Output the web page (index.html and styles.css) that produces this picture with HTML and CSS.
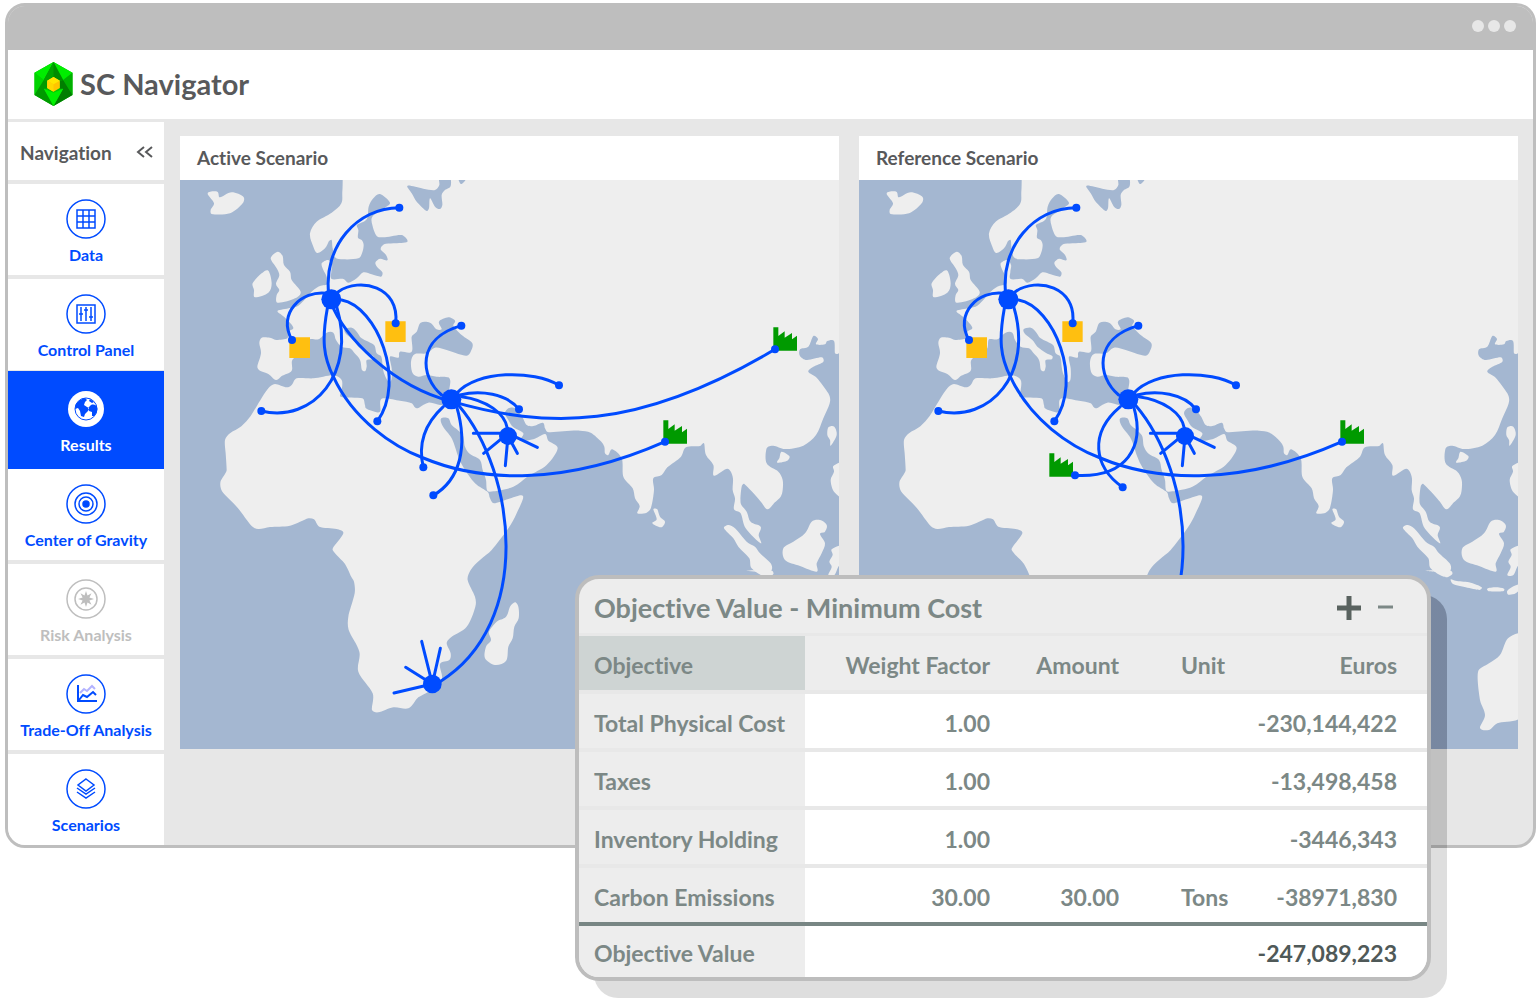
FILE: index.html
```html
<!DOCTYPE html>
<html lang="en">
<head>
<meta charset="utf-8">
<title>SC Navigator</title>
<meta name="viewport" content="width=device-width, initial-scale=1">
<link rel="stylesheet" href="styles.css">
</head>
<body>
<div class="stage">
  <div class="window">
    <div class="titlebar"><span class="dot"></span><span class="dot"></span><span class="dot"></span></div>
    <header class="brand">
      <svg class="logo" viewBox="0 0 114 132" aria-hidden="true">
        <path fill="#00c800" d="M57 0l57 32v67l-57 33L0 99V32z"/>
        <path fill="#00ee00" d="M57 0L0 32l28 22zM57 0l57 32-28 22z"/>
        <path fill="#008c00" d="M57 0L28 54l10 2 19-11 19 11 10-2z"/>
        <path fill="#00a400" d="M57 0L28 54l10 2 19-11z"/>
        <path fill="#00d400" d="M0 32l28 22L0 99z"/>
        <path fill="#00b000" d="M114 32L86 54l28 45z"/>
        <path fill="#009a00" d="M28 54L0 99l28-19h10V56zM0 99l28-19 29 52z"/>
        <path fill="#007e00" d="M86 54l28 45-28-19H76V56zM114 99L86 80l-29 52z"/>
        <path fill="#00f000" d="M28 80l29 12 29-12-29 52z"/>
        <path fill="#ffc400" d="M57 45l19 11v22L57 89 38 78V56z"/>
        <path fill="#ffe600" d="M57 45l19 11-19 11-19-11z"/>
        <path fill="#ffd800" d="M38 56l19 11v22L38 78z"/>
      </svg>
      <h1>SC Navigator</h1>
    </header>
    <div class="body">
      <nav class="sidebar" aria-label="Navigation">
        <div class="sidebar-head"><span>Navigation</span>
          <button class="collapse" aria-label="Collapse navigation"><svg viewBox="0 0 18 12"><path d="M8 1L2 6l6 5M16 1l-6 5 6 5"/></svg></button>
        </div>
        <a class="item" href="#data">
          <svg class="icon" viewBox="0 0 40 40"><circle cx="20" cy="20" r="19"/><path d="M11 11h18v18H11zM17 11v18M23 11v18M11 17h18M11 23h18"/></svg>
          <span>Data</span></a>
        <a class="item" href="#control">
          <svg class="icon" viewBox="0 0 40 40"><circle cx="20" cy="20" r="19"/><path d="M11 11h18v18H11zM15 13v14M20 13v14M25 13v14M13 20h4M18 16h4M23 23h4"/></svg>
          <span>Control Panel</span></a>
        <a class="item active" href="#results" aria-current="page">
          <svg class="icon" viewBox="0 0 40 40"><circle class="disc" cx="20" cy="20" r="18"/><circle class="globe" cx="20" cy="20" r="11"/><path class="landmass" d="M10 15c2-3 5-5 9-6l2 2-2 2-1 3 3 2 2 1-1 3-3 3-1 3-3-1-1-5-2-3-3 1zM31 18c-1-2-3-3-6-2l-3 3 1 3 3 1 0 4 2 0c2-2 4-5 3-9zM24 10l4 3-2 1-3-2z"/></svg>
          <span>Results</span></a>
        <a class="item" href="#gravity">
          <svg class="icon" viewBox="0 0 40 40"><circle cx="20" cy="20" r="19"/><circle cx="20" cy="20" r="11"/><circle cx="20" cy="20" r="7"/><circle class="solid" cx="20" cy="20" r="3"/></svg>
          <span>Center of Gravity</span></a>
        <a class="item disabled" href="#risk" aria-disabled="true">
          <svg class="icon" viewBox="0 0 40 40"><circle cx="20" cy="20" r="19"/><circle cx="20" cy="20" r="11"/><path class="solid thin" d="M20 12l1.500 4.500 4-2.200-2.100 4.100 4.600 1.600-4.600 1.600 2.100 4.100-4-2.200L20 28l-1.500-4.500-4 2.200 2.100-4.100L12 20l4.600-1.600-2.100-4.100 4 2.200z"/></svg>
          <span>Risk Analysis</span></a>
        <a class="item" href="#tradeoff">
          <svg class="icon" viewBox="0 0 40 40"><circle cx="20" cy="20" r="19"/><path class="pale" d="M14 19l4-4 3 2 5-5 3 3"/><path class="bold" d="M12 11v16h19M13 26l4-5 4 2 6-5 3 3"/></svg>
          <span>Trade-Off Analysis</span></a>
        <a class="item" href="#scenarios">
          <svg class="icon" viewBox="0 0 40 40"><circle cx="20" cy="20" r="19"/><path d="M20 10l8 6-8 6-8-6zM11 19l9 6 9-6M11 23l9 6 9-6"/></svg>
          <span>Scenarios</span></a>
      </nav>
      <main class="panels">
        <section class="panel">
          <h2>Active Scenario</h2>
          <svg class="map" viewBox="0 0 1977 1707" role="img" aria-label="Map of the active scenario">
            <defs>
              <g id="land">
                <path data-coast="488,0 487,35 484,70 455,98 410,125 390,160 400,200 412,219 435,205 447,183 455,180 458,205 465,232 490,238 535,235 546,220 551,195 545,180 534,173 535,150 531,135 560,118 566,80 580,55 600,42 630,68 612,85 577,110 577,135 590,168 610,172 665,165 682,185 640,190 612,193 602,208 618,225 622,241 600,236 586,248 592,262 607,277 603,290 575,283 550,277 530,295 505,308 490,297 455,297 454,275 456,255 445,240 425,250 430,270 440,290 443,312 420,318 398,332 380,352 355,377 330,384 293,392 305,405 320,418 340,443 325,455 322,475 290,480 270,473 245,473 238,490 243,520 232,560 240,572 265,582 288,600 305,588 335,572 337,540 365,518 385,505 390,478 415,478 440,458 460,458 468,480 485,500 510,505 524,520 540,540 546,570 556,573 560,560 560,540 578,538 580,528 560,518 535,500 520,480 498,462 494,448 515,443 530,455 545,475 582,495 590,520 604,530 608,560 612,580 626,606 634,600 635,565 630,530 655,533 660,515 695,515 695,470 710,455 722,428 750,428 770,448 785,447 777,425 805,412 825,422 820,437 845,465 877,490 872,515 860,527 835,522 800,510 765,503 740,520 705,522 693,545 698,580 715,590 740,585 770,590 805,592 811,605 805,640 800,670 780,675 745,668 710,685 695,670 660,662 605,656 600,695 575,692 558,685 555,675 547,655 482,650 485,630 485,600 460,586 400,595 350,595 335,615 320,622 285,612 265,625 240,662 212,708 185,738 150,760 135,780 137,820 140,870 135,882 121,908 127,935 170,980 215,1038 235,1047 270,1041 330,1037 385,1015 402,1018 418,1040 470,1047 490,1060 458,1106 465,1120 495,1152 512,1187 522,1205 524,1240 505,1310 506,1350 538,1415 535,1475 578,1540 576,1590 595,1597 640,1582 685,1585 715,1552 745,1535 785,1500 780,1452 808,1440 812,1420 800,1390 815,1370 860,1340 886,1280 885,1250 863,1200 872,1170 900,1140 935,1110 985,1045 1010,1000 1029,948 985,957 942,970 930,955 924,937 885,910 850,862 835,830 815,775 788,738 783,716 805,715 815,735 848,765 855,800 870,822 900,840 908,870 918,900 922,932 940,934 1000,920 1045,888 1100,855 1133,805 1105,782 1095,762 1060,778 1020,782 1030,760 1000,742 985,720 975,700 985,685 1005,684 1025,708 1040,735 1060,738 1088,728 1095,745 1103,756 1150,754 1200,752 1232,758 1264,785 1273,800 1275,820 1285,825 1297,808 1325,835 1330,890 1358,925 1365,955 1379,978 1372,1000 1400,998 1413,983 1422,930 1420,895 1445,885 1462,862 1503,830 1518,802 1560,798 1572,790 1578,825 1600,855 1602,887 1642,866 1658,890 1658,930 1665,955 1662,988 1682,1000 1697,1045 1742,1090 1736,1065 1742,1040 1712,1025 1700,995 1682,970 1685,920 1693,912 1740,962 1762,988 1785,967 1802,950 1808,930 1808,900 1795,875 1760,850 1760,805 1780,797 1815,807 1870,797 1908,765 1930,715 1950,665 1945,640 1910,593 1885,575 1900,560 1930,545 1925,532 1880,540 1860,528 1860,508 1885,500 1900,468 1914,477 1908,493 1935,493 1942,483 1962,483 1965,520 1977,518 1977,-20 488,-20"/>
                <path data-coast="83,40 112,35 120,52 155,37 190,50 188,70 150,100 95,102 92,90 102,70"/>
                <path data-coast="272,235 293,215 308,228 312,255 330,275 335,300 362,335 345,355 293,368 290,345 298,330 288,312 298,285 290,265"/>
                <path data-coast="218,310 245,280 265,272 275,310 265,338 225,352 222,330"/>
                <path data-coast="1005,1267 1015,1280 1016,1315 1003,1340 998,1375 985,1400 978,1443 945,1455 915,1435 918,1400 933,1380 927,1355 950,1325 978,1310 990,1280"/>
                <path data-coast="1420,988 1432,988 1440,1010 1455,1025 1443,1042 1417,1030 1430,1018"/>
                <path data-coast="1632,1045 1645,1035 1665,1045 1700,1085 1725,1100 1740,1120 1772,1150 1775,1170 1755,1190 1715,1165 1708,1135 1675,1100 1660,1075"/>
                <path data-coast="1810,1105 1840,1085 1875,1060 1895,1025 1920,1020 1940,1035 1935,1055 1920,1062 1935,1090 1925,1120 1910,1150 1910,1175 1860,1158 1815,1140"/>
                <path data-coast="1990,1098 1955,1108 1958,1125 1948,1145 1955,1160 1945,1185 1963,1185 1975,1160 1990,1150"/>
                <path data-coast="1990,850 1960,858 1962,875 1952,900 1962,935 1990,950"/>
                <path data-coast="1945,742 1963,740 1970,765 1952,797 1950,780 1942,765"/>
                <path data-coast="1805,815 1828,828 1822,842 1792,848 1798,835"/>
                <path data-coast="1700,1172 1775,1172 1780,1182 1762,1192 1750,1178"/>
                <path data-coast="1775,1198 1790,1202 1830,1207 1868,1222 1862,1230 1820,1222 1782,1212"/>
                <path data-coast="1885,1226 1910,1222 1935,1226 1932,1234 1890,1234"/>
                <path data-coast="1945,1232 1965,1218 1990,1210 1990,1220 1970,1240 1948,1244"/>
                <path data-coast="1990,1365 1947,1375 1923,1425 1890,1450 1857,1476 1863,1560 1878,1605 1863,1644 1890,1650 1915,1630 1990,1605"/>
                <path class="sea" data-coast="683,17 730,26 765,30 778,15 778,-10 808,-10 812,18 795,30 785,45 787,75 780,87 765,80 750,55 747,85 740,93 710,65 695,40"/>
                <path class="sea" data-coast="835,-10 838,5 845,12 858,-5"/>
              </g>
              <path id="factory" class="factory" d="M0 0h15v26l19-14v19l22-14v19l15-11v45H0z"/>
              <g id="network">
                <path class="store" d="M328 472h62v62h-62zM616 424h61v62h-61z"/>
                <use href="#factory" x="1450" y="721"/>
                <g class="routes">
                  <path d="M446 340C430 200 530 83 658 83"/>
                  <path d="M440 340C365 330 290 400 336 480"/>
                  <path d="M475 335C540 290 660 320 647 430"/>
                  <path d="M470 380C530 580 400 730 244 693"/>
                  <path d="M485 360C590 380 680 600 592 724"/>
                  <path d="M442 385C425 480 430 530 460 590C520 720 640 800 730 834C900 905 1150 920 1455 785"/>
                  <path d="M785 645C720 590 708 475 844 437"/>
                  <path d="M830 640C890 570 1060 570 1137 616"/>
                  <path d="M840 645C900 630 980 640 1017 688"/>
                  <path d="M845 650C920 660 975 700 982 745"/>
                  <path d="M835 675C1010 880 1060 1330 780 1505"/>
                  <path d="M880 760H984L911 820M984 768L976 857M984 768L1012 820M984 760L1072 802"/>
                  <path d="M757 1512L725 1384M757 1512L781 1405M757 1512L677 1462M757 1512L642 1539"/>
                </g>
                <g class="nodes">
                  <circle cx="454" cy="358" r="30"/><circle cx="814" cy="658" r="30"/><circle cx="984" cy="768" r="27"/><circle cx="757" cy="1512" r="28"/>
                  <circle cx="658" cy="83" r="12"/><circle cx="336" cy="480" r="12"/><circle cx="647" cy="430" r="12"/><circle cx="244" cy="693" r="12"/>
                  <circle cx="592" cy="724" r="12"/><circle cx="1455" cy="785" r="12"/><circle cx="844" cy="437" r="12"/><circle cx="1137" cy="616" r="12"/><circle cx="1017" cy="688" r="12"/>
                </g>
              </g>
            </defs>
            <use href="#land"/>
            <use href="#factory" x="1780" y="442"/>
            <use href="#network"/>
            <g class="routes">
              <path d="M454 370C490 470 640 620 814 664C1100 745 1370 755 1785 508"/>
              <path d="M790 680C730 735 715 800 730 862"/>
              <path d="M830 680C865 800 840 900 760 946"/>
            </g>
            <g class="nodes"><circle cx="1785" cy="508" r="12"/><circle cx="730" cy="862" r="12"/><circle cx="760" cy="946" r="12"/></g>
          </svg>
        </section>
        <section class="panel">
          <h2>Reference Scenario</h2>
          <svg class="map" viewBox="0 0 1977 1707" role="img" aria-label="Map of the reference scenario">
            <use href="#land"/>
            <g transform="translate(-6 0)">
              <use href="#network"/>
              <use href="#factory" x="577" y="820"/>
              <g class="routes">
                <path d="M830 680C865 800 810 895 654 886"/>
                <path d="M790 680C695 760 710 860 797 922"/>
              </g>
              <g class="nodes"><circle cx="654" cy="886" r="12"/><circle cx="797" cy="922" r="12"/></g>
            </g>
          </svg>
        </section>
      </main>
    </div>
  </div>

  <div class="overlay">
    <section class="dialog" aria-labelledby="dialog-title">
      <header class="dialog-head">
        <h2 id="dialog-title">Objective Value - Minimum Cost</h2>
        <button class="zoom" aria-label="Expand"><svg viewBox="0 0 24 24"><path class="plus" d="M12 0v24M0 12h24"/></svg></button>
        <button class="zoom" aria-label="Collapse"><svg viewBox="0 0 24 24"><path class="minus" d="M5 11h15"/></svg></button>
      </header>
      <table>
        <colgroup><col class="c-name"><col class="c-weight"><col class="c-amount"><col class="c-unit"><col></colgroup>
        <thead><tr><th class="name" scope="col">Objective</th><th scope="col">Weight Factor</th><th scope="col">Amount</th><th class="unit" scope="col">Unit</th><th scope="col">Euros</th></tr></thead>
        <tbody>
          <tr><th class="name" scope="row">Total Physical Cost</th><td>1.00</td><td></td><td></td><td>-230,144,422</td></tr>
          <tr><th class="name" scope="row">Taxes</th><td>1.00</td><td></td><td></td><td>-13,498,458</td></tr>
          <tr><th class="name" scope="row">Inventory Holding</th><td>1.00</td><td></td><td></td><td>-3446,343</td></tr>
          <tr><th class="name" scope="row">Carbon Emissions</th><td>30.00</td><td>30.00</td><td class="unit">Tons</td><td>-38971,830</td></tr>
        </tbody>
        <tfoot><tr><th class="name" scope="row">Objective Value</th><td></td><td></td><td></td><td class="total">-247,089,223</td></tr></tfoot>
      </table>
    </section>
  </div>
</div>
<script src="script.js"></script>
</body>
</html>
```
FILE: styles.css
```css
* { box-sizing: border-box; }
body { margin: 0; background: #fff; color: #58595b; font-family: Lato, "Liberation Sans", sans-serif; font-weight: 700; font-variant-ligatures: none; }
h1, h2 { margin: 0; font-weight: 700; }
button { padding: 0; border: 0; background: none; cursor: pointer; }

.stage { position: relative; padding: 3px 4px 151px 5px; }
.window { border: 3px solid #bebebe; border-radius: 20px; background: #e7e7e7; overflow: hidden; }
.titlebar { display: flex; justify-content: flex-end; align-items: center; gap: 4px; height: 44px; padding: 0 17px 4px; background: #bebebe; }
.dot { width: 12px; height: 12px; border-radius: 50%; background: #e7e7e7; }
.brand { display: flex; align-items: center; gap: 7px; height: 69px; padding: 0 26px 2px; background: #fff; }
.logo { width: 39px; height: 44px; }
.brand h1 { font-size: 29px; line-height: 36px; }
.body { display: flex; padding-top: 3px; }

.sidebar { display: flex; flex-direction: column; gap: 4px; width: 156px; flex: none; font-size: 16px; }
.sidebar-head { display: flex; justify-content: space-between; align-items: center; height: 58px; padding: 2px 10px 0 12px; background: #fff; font-size: 19px; }
.collapse { width: 18px; height: 12px; }
.collapse svg { display: block; fill: none; stroke: #58595b; stroke-width: 2; }
.item { display: flex; flex-direction: column; align-items: center; gap: 5px; height: 91px; padding-top: 15px; background: #fff; color: #004bff; line-height: 22px; text-decoration: none; white-space: nowrap; }
.item.active { height: 98px; margin: -3px 0 -4px; padding-top: 18px; background: #004bff; color: #fff; }
.item.disabled { color: #bebebe; }
.icon { width: 40px; height: 40px; flex: none; fill: none; stroke: currentColor; stroke-width: 1.5; }
.icon .solid { fill: currentColor; }
.icon .thin { stroke: none; }
.icon .bold { stroke-width: 2; }
.icon .pale { stroke: #b3b3ff; stroke-width: 2; }
.icon .disc { fill: #fff; stroke: none; }
.icon .globe { fill: #fff; stroke: #004bff; stroke-width: 1; }
.icon .landmass { fill: #004bff; stroke: none; }

.panels { display: flex; align-items: flex-start; gap: 20px; flex: 1; padding: 14px 15px 0 16px; }
.panel { flex: 1; min-width: 0; background: #fff; }
.panel h2 { padding: 0 17px; font-size: 19px; line-height: 44px; }
.map { display: block; width: 100%; background: #a4b7d1; fill: #eee; overflow: hidden; }
.sea { fill: #a4b7d1; }
.routes { fill: none; stroke: #004bff; stroke-width: 9; stroke-linecap: round; stroke-linejoin: round; }
.nodes { fill: #004bff; }
.store { fill: #ffbf10; }
.factory { fill: #009a00; }

.overlay { position: absolute; right: 109px; bottom: 18px; z-index: 1; width: 856px; }
.overlay::before { content: ""; position: absolute; z-index: -1; inset: 20px -16px -17px 19px; border-radius: 24px; background: linear-gradient(rgba(0, 8, 32, .27) 154px, rgba(0, 0, 0, .165) 154px, rgba(0, 0, 0, .165) 253px, rgba(0, 0, 0, .13) 253px); }
.dialog { border: 4px solid #bdbdbd; border-radius: 24px; background: #ededed; color: #7c8886; overflow: hidden; }
.dialog-head { display: flex; align-items: center; gap: 12px; height: 57px; padding: 0 30px 0 15px; border-bottom: 3px solid #e8e8e8; }
.dialog-head h2 { flex: 1; padding-top: 4px; font-size: 27px; line-height: 36px; }
.zoom { width: 24px; height: 24px; margin-top: 4px; }
.zoom svg { display: block; }
.plus { stroke: #59625f; stroke-width: 5; }
.minus { stroke: #7c8886; stroke-width: 3; }

table { width: 100%; border-collapse: separate; border-spacing: 0; table-layout: fixed; font-size: 23px; line-height: 28px; }
.c-name { width: 226px; }
.c-weight { width: 185px; }
.c-amount { width: 129px; }
.c-unit { width: 128px; }
th, td { height: 58px; padding: 4px 0 0; border-bottom: 4px solid #e8e8e8; font-weight: 700; text-align: right; }
td { background: #fff; }
th:last-child, td:last-child { padding-right: 30px; }
.name { padding-left: 15px; background: #ededed; text-align: left; }
thead .name { background: #ced4d3; }
.unit { padding-left: 62px; text-align: left; }
tbody tr:last-child > * { border-bottom-color: #788684; }
tfoot tr > * { height: 51px; padding-top: 2px; border-bottom: 0; }
.total { color: #4f5958; }
```
FILE: script.js
```js
// Turns each list of coast points into a closed, smoothed outline.
document.querySelectorAll('[data-coast]').forEach(function (path) {
  var pts = path.dataset.coast.split(' ').map(function (p) { return p.split(',').map(Number); });
  var n = pts.length;
  var d = 'M' + pts[0];
  for (var i = 0; i < n; i++) {
    var a = pts[(i + n - 1) % n], b = pts[i], c = pts[(i + 1) % n], e = pts[(i + 2) % n];
    // Handles are limited by the segment length so long edges do not overshoot.
    var len = Math.hypot(c[0] - b[0], c[1] - b[1]);
    var h = function (p, q) {
      var m = Math.hypot(q[0] - p[0], q[1] - p[1]) || 1;
      var k = Math.min(m / 6, len / 3) / m;
      return [(q[0] - p[0]) * k, (q[1] - p[1]) * k];
    };
    var u = h(a, c), v = h(b, e);
    d += 'C' + [b[0] + u[0], b[1] + u[1], c[0] - v[0], c[1] - v[1], c[0], c[1]].map(Math.round);
  }
  path.setAttribute('d', d + 'Z');
});
```
